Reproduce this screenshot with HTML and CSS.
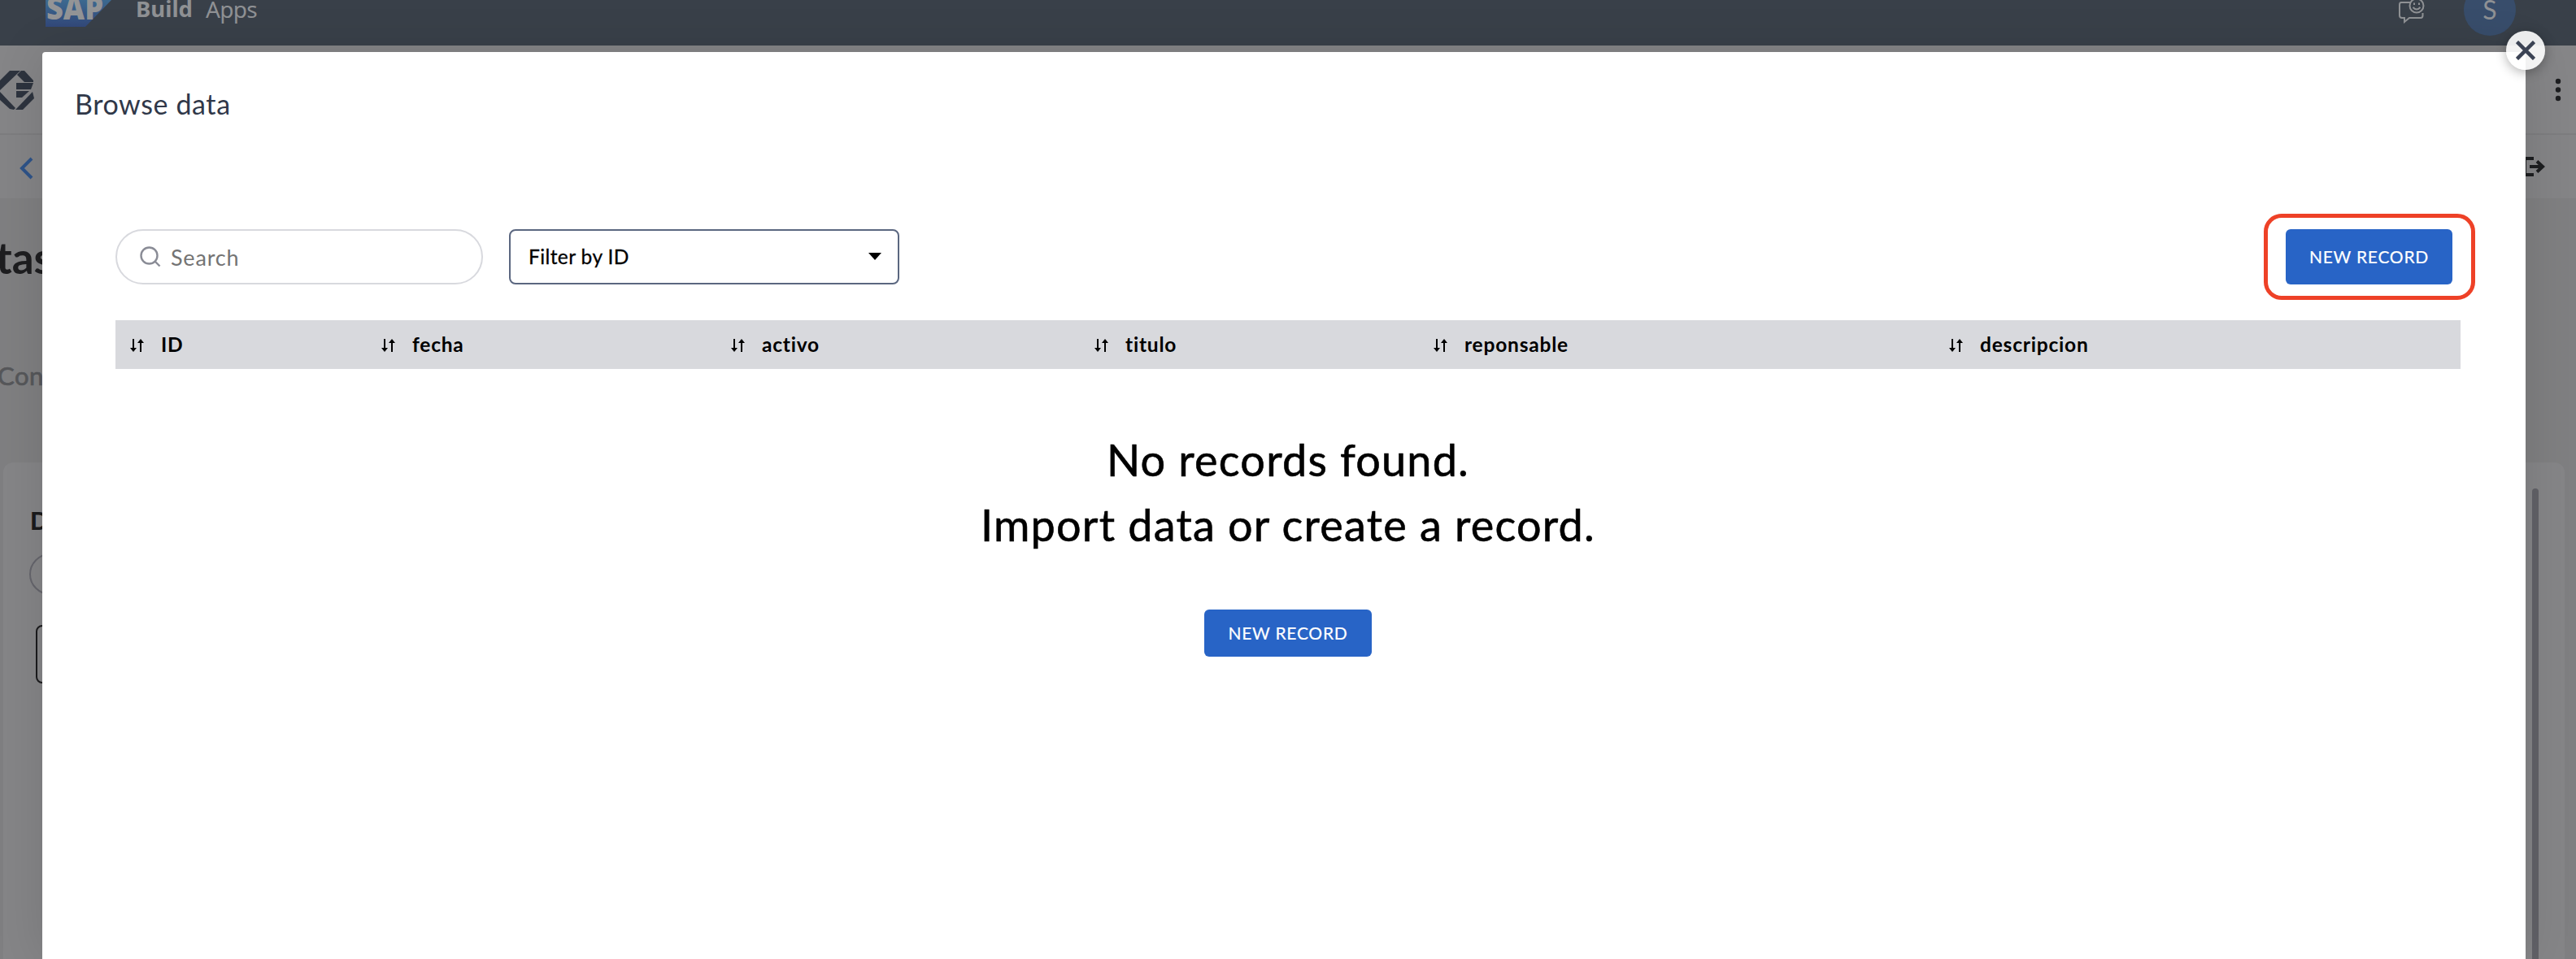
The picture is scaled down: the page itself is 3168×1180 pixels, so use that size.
FILE: index.html
```
<!DOCTYPE html>
<html lang="en">
<head>
<meta charset="utf-8">
<title>SAP Build Apps</title>
<link rel="stylesheet" href="styles.css">
</head>
<body>
<div class="app">
  <header class="shell">
    <div class="brand">
      <svg class="sap" width="82" height="43" viewBox="0 0 82 43">
        <defs><linearGradient id="g" x1="0" y1="0" x2="0" y2="1"><stop offset="0" stop-color="#3f7396"/><stop offset="1" stop-color="#32487a"/></linearGradient></defs>
        <path d="M0 0H82V9L49 43H0Z" fill="url(#g)"/>
        <text class="sap-text" x="1" y="33.500" textLength="70" lengthAdjust="spacingAndGlyphs">SAP</text>
      </svg>
      <span class="product"><b>Build</b><span class="sub">Apps</span></span>
    </div>
    <div class="shell-actions">
      <svg width="34" height="34" viewBox="0 0 34 34" fill="none" stroke="#8f9194" stroke-width="2">
        <path d="M15 8H4Q2 8 2 11V24Q2 27 5 27H8V32L14 27H28Q30.500 27 30.500 24V21"/>
        <circle cx="23" cy="12" r="8.500"/><path d="M18.500 14Q23 19 27.500 14"/>
        <path d="M20 8.500V11M26 8.500V11"/>
      </svg>
      <span class="avatar">S</span>
    </div>
  </header>
  <div class="toolbar">
    <svg width="42" height="48" viewBox="0 0 42 48" fill="#2d333e">
      <path d="M12 0H25L0 24V12Z"/><path d="M26 0H30L41 12V14H30L21 5Z"/>
      <path d="M20 15H41L38 23H20Z"/><path d="M20 25H36L27 33H20Z"/>
      <path d="M0 26L19 46L17 48L12 47L0 36Z"/><path d="M19 48L40 26L42 34L28 48Z"/>
    </svg>
    <svg width="8" height="30" viewBox="0 0 8 30" fill="#1d1e20"><circle cx="4" cy="4" r="3.200"/><circle cx="4" cy="14.500" r="3.200"/><circle cx="4" cy="25" r="3.200"/></svg>
  </div>
  <div class="navbar">
    <svg width="18" height="28" viewBox="0 0 18 28" fill="none" stroke="#2e5388" stroke-width="4"><path d="M15 2L3 14L15 26"/></svg>
    <svg class="exit" width="32" height="26" viewBox="0 0 32 26" fill="none" stroke="#1d1e20" stroke-width="4"><path d="M18 3H7V23H18M13 13H28M22 6.500L29 13L22 19.500"/></svg>
  </div>
  <main class="content">
    <h1 class="page-title">tas</h1>
    <p class="page-tab">Con</p>
    <section class="panel">
      <div class="panel-main">
        <h2 class="panel-title">D</h2>
        <div class="panel-search"></div>
        <div class="panel-box"></div>
      </div>
      <div class="scrollbar"></div>
    </section>
  </main>
</div>

<div class="modal">
  <h3 class="modal-title">Browse data</h3>
  <div class="filters">
    <div class="search">
      <svg width="26" height="26" viewBox="0 0 26 26" fill="none" stroke="#8a8c96" stroke-width="2.400"><circle cx="11.500" cy="11.500" r="10"/><path d="M18.500 18.500L24.500 24.500"/></svg>
      <span class="search-text">Search</span>
    </div>
    <div class="select"><span class="select-text">Filter by ID</span><svg width="16" height="9" viewBox="0 0 16 9"><path d="M0 0H16L8 9Z"/></svg></div>
    <div class="highlight"><button class="btn btn-tall">NEW RECORD</button></div>
  </div>
  <div class="thead">
    <div class="th"><svg class="sort" viewBox="0 0 17 16"><path d="M3 0H5V11H8L4 16L0 11H3ZM12 16H14V5H17L13 0L9 5H12Z"/></svg><span>ID</span></div>
    <div class="th"><svg class="sort" viewBox="0 0 17 16"><path d="M3 0H5V11H8L4 16L0 11H3ZM12 16H14V5H17L13 0L9 5H12Z"/></svg><span>fecha</span></div>
    <div class="th"><svg class="sort" viewBox="0 0 17 16"><path d="M3 0H5V11H8L4 16L0 11H3ZM12 16H14V5H17L13 0L9 5H12Z"/></svg><span>activo</span></div>
    <div class="th"><svg class="sort" viewBox="0 0 17 16"><path d="M3 0H5V11H8L4 16L0 11H3ZM12 16H14V5H17L13 0L9 5H12Z"/></svg><span>titulo</span></div>
    <div class="th"><svg class="sort" viewBox="0 0 17 16"><path d="M3 0H5V11H8L4 16L0 11H3ZM12 16H14V5H17L13 0L9 5H12Z"/></svg><span>reponsable</span></div>
    <div class="th"><svg class="sort" viewBox="0 0 17 16"><path d="M3 0H5V11H8L4 16L0 11H3ZM12 16H14V5H17L13 0L9 5H12Z"/></svg><span>descripcion</span></div>
  </div>
  <div class="empty">
    <p class="empty-line">No records found.</p>
    <p class="empty-line">Import data or create a record.</p>
    <button class="btn">NEW RECORD</button>
  </div>
  <div class="close"><svg width="24" height="24" viewBox="0 0 24 24" stroke="#3b4354" stroke-width="4.500"><path d="M1.500 1.500L22.500 22.500M22.500 1.500L1.500 22.500"/></svg></div>
</div>
</body>
</html>
```
FILE: styles.css
```
* { box-sizing: border-box; }
body { margin: 0; width: 3168px; height: 1180px; overflow: hidden; position: relative; font-family: Lato, "Noto Sans", sans-serif; font-variant-ligatures: none; color: #000; }
h1, h2, h3, p { margin: 0; font-weight: 400; }
svg { display: block; flex: none; }
.app { height: 1180px; display: flex; flex-direction: column; background: #7f7f81; }
.shell { height: 56px; flex: none; background: #394049; display: flex; justify-content: space-between; padding: 0 74px 0 56px; overflow: hidden; }
.brand { display: flex; margin-top: -10px; gap: 29px; }
.sap-text { font: 900 38px "Open Sans", sans-serif; fill: #939496; }
.product { font: 28px/42px "Noto Sans", sans-serif; color: #8f9194; white-space: nowrap; display: flex; gap: 16px; }
.product b { font-weight: 700; font-size: 27.5px; }
.sub { letter-spacing: -.7px; }
.shell-actions { display: flex; gap: 47px; margin-top: -5px; }
.avatar { width: 64px; height: 64px; margin-top: -15px; border-radius: 50%; background: #384d6b; color: #8f9194; font-size: 32px; line-height: 64px; text-align: center; }
.toolbar { height: 110px; flex: none; background: #858587; border-bottom: 2px solid #7d7d7f; display: flex; justify-content: space-between; align-items: center; padding: 2px 18px 0 0; }
.navbar { height: 78px; flex: none; background: #848486; display: flex; justify-content: space-between; align-items: center; padding: 4px 38px 0 24px; }
.exit { margin-top: -4px; }
.content { flex: 1; display: flex; flex-direction: column; padding: 43px 14px 0 4px; }
.page-title { font-size: 53px; line-height: 60px; font-weight: 700; color: #1e1e20; margin-left: -9px; height: 132px; }
.page-tab { font-size: 31px; line-height: 40px; color: #56575a; -webkit-text-stroke: .7px #56575a; margin-left: -7px; letter-spacing: .5px; height: 150px; margin-top: 23px; margin-bottom: -23px; }
.panel { flex: 1; background: #858587; border-radius: 12px 12px 0 0; display: flex; justify-content: space-between; padding: 32px 32px 0 32px; }
.panel-title { font-size: 30px; line-height: 36px; font-weight: 900; color: #1b1b1d; margin: 21px 0 0 1px; }
.panel-search { width: 200px; height: 51px; margin-top: 23px; border: 2px solid #65656c; border-radius: 26px; }
.panel-box { width: 200px; height: 72px; margin: 37px 0 0 8px; border: 2px solid #1b1b1d; border-radius: 8px; }
.scrollbar { width: 8px; background: #616167; border-radius: 4px 4px 0 0; }
.modal { position: absolute; left: 52px; top: 64px; width: 3054px; height: 1116px; background: #fff; border-radius: 4px 0 0 0; box-shadow: 0 0 60px rgba(0,0,0,.12); padding: 39px 80px 0 90px; display: flex; flex-direction: column; }
.modal-title { font-size: 34px; line-height: 50px; color: #303849; margin-left: -50px; letter-spacing: .6px; }
.filters { height: 106px; margin-top: 110px; display: flex; align-items: center; }
.search { width: 452px; height: 68px; border: 2px solid #d8d9de; border-radius: 34px; display: flex; align-items: center; gap: 12px; padding-left: 28px; font-size: 27px; letter-spacing: .8px; color: #747474; }
.select { width: 480px; height: 68px; margin-left: 32px; border: 2px solid #5b6780; border-radius: 8px; display: flex; justify-content: space-between; align-items: center; padding: 0 20px 2px 22px; font-size: 24.5px; letter-spacing: .4px; -webkit-text-stroke: .3px #000; }
.highlight { width: 260px; height: 106px; margin-left: auto; margin-right: -18px; border: 5px solid #ee4127; border-radius: 22px; display: flex; align-items: center; padding-left: 22px; }
.btn { width: 206px; height: 58px; border: 0; padding: 0 0 1px; border-radius: 6px; background: #2864c6; color: #fff; font: 21px Lato, sans-serif; letter-spacing: .75px; white-space: nowrap; -webkit-text-stroke: .2px #fff; }
.btn-tall { width: 205px; height: 68px; }
.thead { width: 2884px; height: 60px; margin-top: 25px; background: #d8d9dd; display: grid; grid-template-columns: 309px 430px 447px 417px 634px 647px; }
.th { display: flex; align-items: center; gap: 21px; padding: 0 0 1px 18px; font-size: 24.5px; font-weight: 700; letter-spacing: .8px; white-space: nowrap; }
.sort { width: 17px; height: 16px; margin-top: 2px; }
.empty { width: 2884px; display: flex; flex-direction: column; align-items: center; padding-top: 72px; }
.empty-line { font-size: 54px; line-height: 80px; letter-spacing: 1.2px; -webkit-text-stroke: .6px #000; white-space: nowrap; }
.empty .btn { margin-top: 64px; }
.close { position: absolute; right: -24px; top: -26px; width: 48px; height: 48px; border-radius: 50%; background: rgba(255,255,255,.9); box-shadow: 0 3px 14px rgba(0,0,0,.3); display: flex; align-items: center; justify-content: center; }
```
